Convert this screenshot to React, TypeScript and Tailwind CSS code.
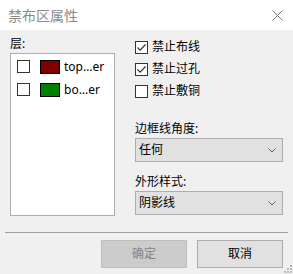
import React from 'react';

const font = "font-['Segoe_UI','Noto_Sans','Noto_Sans_CJK_SC',sans-serif]";

function Check({ checked }: { checked?: boolean }) {
  return (
    <span className="w-[13px] h-[13px] border border-[#333] bg-white flex items-center justify-center shrink-0">
      {checked && (
        <svg width="11" height="11" viewBox="0 0 11 11">
          <path d="M1.5 5.5 L4.2 8.2 L9.5 2.5" fill="none" stroke="#333" strokeWidth="1.2" />
        </svg>
      )}
    </span>
  );
}

function Select({ value }: { value: string }) {
  return (
    <div className="h-[24px] w-[148px] border border-[#adadad] bg-[#e1e1e1] flex items-center justify-between pl-[3px] pr-[6px]">
      <span className="text-[12px] text-black">{value}</span>
      <svg width="8" height="5" viewBox="0 0 8 5">
        <path d="M0.5 0.5 L4 4 L7.5 0.5" fill="none" stroke="#606060" strokeWidth="1" />
      </svg>
    </div>
  );
}

export default function App() {
  const layers = [
    { name: 'top…er', color: 'bg-[#800000]' },
    { name: 'bo…er', color: 'bg-[#008000]' },
  ];

  return (
    <div className={`w-[293px] h-[274px] bg-[#f0f0f0] flex flex-col relative ${font}`}>
      {/* Title bar */}
      <div className="h-[30px] bg-white flex items-center justify-between pl-[8px] pr-[10px]">
        <span className="text-[14px] text-[#8a8a8a]">禁布区属性</span>
        <svg width="11" height="11" viewBox="0 0 11 11">
          <path d="M0.5 0.5 L10.5 10.5 M10.5 0.5 L0.5 10.5" stroke="#777" strokeWidth="1" />
        </svg>
      </div>

      {/* Body */}
      <div className="flex gap-[20px] pl-[10px] pt-[6px]">
        {/* Layers */}
        <div className="w-[105px] flex flex-col">
          <div className="h-[16px] leading-[16px] text-[12px] text-black mb-[1px]">层:</div>
          <div className="h-[163px] border border-[#adadad] bg-white flex flex-col gap-[10px] pt-[6px] pl-[6px]">
            {layers.map((l) => (
              <div key={l.name} className="flex items-center h-[13px]">
                <Check />
                <span className={`ml-[10px] w-[20px] h-[14px] border border-black ${l.color}`} />
                <span className="ml-[4px] text-[12px] text-black">{l.name}</span>
              </div>
            ))}
          </div>
        </div>

        {/* Options */}
        <div className="w-[148px] flex flex-col">
          <div className="flex flex-col">
            {[
              { label: '禁止布线', checked: true },
              { label: '禁止过孔', checked: true },
              { label: '禁止敷铜', checked: false },
            ].map((o) => (
              <div key={o.label} className="h-[22px] flex items-center gap-[4px]">
                <Check checked={o.checked} />
                <span className="text-[12px] text-black">{o.label}</span>
              </div>
            ))}
          </div>
          <div className="mt-[19px] h-[16px] leading-[16px] text-[12px] text-black mb-[1px]">边框线角度:</div>
          <Select value="任何" />
          <div className="mt-[12px] h-[16px] leading-[16px] text-[12px] text-black mb-[1px]">外形样式:</div>
          <Select value="阴影线" />
        </div>
      </div>

      {/* Separator */}
      <div className="mx-[5px] mt-[16px] h-px bg-[#a0a0a0]" />

      {/* Buttons */}
      <div className="flex justify-end gap-[10px] pr-[10px] mt-[7px]">
        <button className="w-[86px] h-[28px] bg-[#cccccc] border border-[#bfbfbf] text-[12px] text-[#838383]">确定</button>
        <button className="w-[86px] h-[28px] bg-[#e1e1e1] border border-[#adadad] text-[12px] text-black">取消</button>
      </div>

      {/* Resize grip */}
      <svg className="absolute right-[1px] bottom-[1px]" width="8" height="8" viewBox="0 0 8 8">
        <rect x="6" y="0" width="2" height="2" fill="#b8b8b8" />
        <rect x="3" y="3" width="2" height="2" fill="#b8b8b8" />
        <rect x="6" y="3" width="2" height="2" fill="#b8b8b8" />
        <rect x="0" y="6" width="2" height="2" fill="#b8b8b8" />
        <rect x="3" y="6" width="2" height="2" fill="#b8b8b8" />
        <rect x="6" y="6" width="2" height="2" fill="#b8b8b8" />
      </svg>
    </div>
  );
}
